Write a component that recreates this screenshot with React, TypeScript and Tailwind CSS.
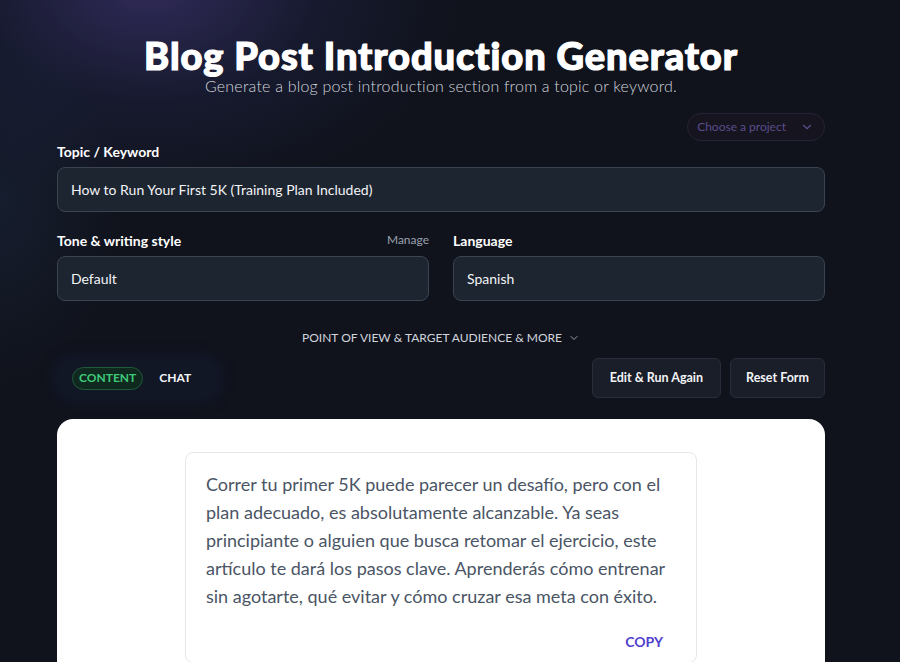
import { ChevronDown } from "lucide-react";

const font = { fontFamily: "Lato, 'Noto Sans', sans-serif" };

function Field({ label, value, extra }: { label: string; value: string; extra?: string }) {
  return (
    <div className="flex flex-col">
      <div className="flex items-center justify-between h-[20px] mb-[6px]">
        <span className="text-[14px] font-bold text-white">{label}</span>
        {extra && <span className="text-[12px] text-gray-400">{extra}</span>}
      </div>
      <div className="h-[45px] flex items-center px-[13px] rounded-lg border border-[#3b4452] bg-[#1d2531] text-[14px] text-gray-100">
        {value}
      </div>
    </div>
  );
}

export default function App() {
  return (
    <div className="relative min-h-[662px] w-full overflow-hidden bg-[#10131c] pr-[18px]" style={font}>
      {/* glow */}
      <div className="pointer-events-none absolute -left-[160px] -top-[230px] h-[430px] w-[620px] rounded-full bg-[radial-gradient(closest-side,rgba(80,66,150,0.5),rgba(45,50,110,0.22)_55%,transparent)]" />
      <div className="pointer-events-none absolute -left-[120px] top-[20px] h-[360px] w-[240px] rounded-full bg-[radial-gradient(closest-side,rgba(40,60,100,0.25),transparent)]" />

      <div className="relative mx-auto w-[768px] pt-[36px]">
        <div className="flex flex-col items-center">
          <h1 className="text-[38px] leading-[38px] font-black tracking-[0.9px] text-white [-webkit-text-stroke:1.2px_white]">
            Blog Post Introduction Generator
          </h1>
          <p className="text-[16px] leading-[20px] mt-[2px] text-gray-300 font-light tracking-[0.2px]">
            Generate a blog post introduction section from a topic or keyword.
          </p>
        </div>

        <div className="flex justify-end mt-[17px]">
          <div className="flex items-center gap-[14px] h-[28px] pl-[9px] pr-[10px] rounded-full border border-[#252436] bg-[#15141f] text-[12px] text-[#5b4d8c]">
            Choose a project
            <ChevronDown size={14} strokeWidth={2} className="text-[#5b4d8c]" />
          </div>
        </div>

        <div className="mt-0">
          <Field label="Topic / Keyword" value="How to Run Your First 5K (Training Plan Included)" />
        </div>

        <div className="grid grid-cols-2 gap-[24px] mt-[18px]">
          <Field label="Tone & writing style" value="Default" extra="Manage" />
          <Field label="Language" value="Spanish" />
        </div>

        <div className="flex items-center justify-center gap-[6px] mt-[29px] h-[16px] text-[12px] text-gray-300">
          POINT OF VIEW &amp; TARGET AUDIENCE &amp; MORE
          <ChevronDown size={12} className="text-gray-400" />
        </div>

        <div className="flex items-center justify-between mt-[12px]">
          <div className="flex items-center gap-[4px] px-[15px] py-[8px] rounded-2xl bg-[#121726] shadow-[0_0_12px_4px_rgba(20,26,48,0.7)]">
            <span className="px-[6px] h-[23px] flex items-center rounded-full border border-[#1f5a3c] bg-[#10291f] text-[12px] font-bold text-[#3fca7a]">
              CONTENT
            </span>
            <span className="px-[12px] h-[23px] flex items-center rounded-full text-[12px] font-bold text-gray-100">
              CHAT
            </span>
          </div>
          <div className="flex items-center gap-[9px]">
            <button className="h-[40px] px-[17px] rounded-md border border-[#272d3a] bg-[#1a1e29] text-[12.5px] font-bold text-gray-100">
              Edit &amp; Run Again
            </button>
            <button className="h-[40px] px-[15px] rounded-md border border-[#272d3a] bg-[#1a1e29] text-[12.5px] font-bold text-gray-100">
              Reset Form
            </button>
          </div>
        </div>

        <div className="mt-[21px] rounded-2xl bg-white pt-[33px] px-[128px] h-[260px]">
          <div className="rounded-lg border border-gray-200 px-[20px] pt-[17px] pb-[10px]">
            <p className="text-[18px] leading-[28px] text-gray-600">
              Correr tu primer 5K puede parecer un desafío, pero con el plan adecuado, es absolutamente alcanzable. Ya seas principiante o alguien que busca retomar el ejercicio, este artículo te dará los pasos clave. Aprenderás cómo entrenar sin agotarte, qué evitar y cómo cruzar esa meta con éxito.
            </p>
            <div className="flex justify-end mt-[22px] pr-[13px]">
              <button className="text-[14px] leading-[20px] font-bold text-[#4f3fcf]">COPY</button>
            </div>
          </div>
        </div>
      </div>
    </div>
  );
}
